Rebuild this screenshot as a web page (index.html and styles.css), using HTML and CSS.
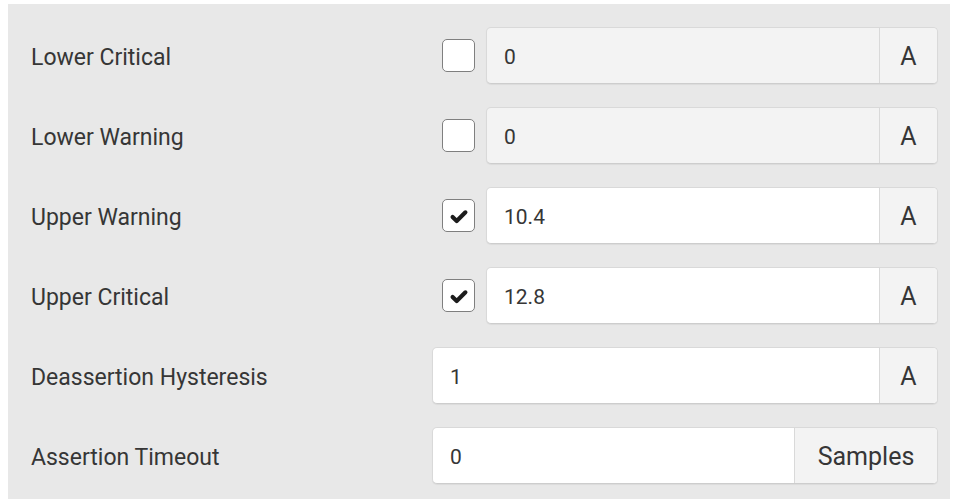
FILE: index.html
```html
<!DOCTYPE html>
<html lang="en">

<head>
    <meta charset="UTF-8">
    <meta name="viewport" content="width=device-width, initial-scale=1.0">
    <link rel="stylesheet" href="styles.css">
</head>

<body>
    <div class="panel">
        <div class="row">
            <div class="label">Lower Critical</div>
            <div class="control">
                <span class="check"></span>
                <div class="group disabled">
                    <span class="value">0</span>
                    <span class="addon">A</span>
                </div>
            </div>
        </div>
        <div class="row">
            <div class="label">Lower Warning</div>
            <div class="control">
                <span class="check"></span>
                <div class="group disabled">
                    <span class="value">0</span>
                    <span class="addon">A</span>
                </div>
            </div>
        </div>
        <div class="row">
            <div class="label">Upper Warning</div>
            <div class="control">
                <span class="check on">
                    <svg viewBox="0 0 24 24" width="22" height="22"><path d="M5 13 L9.5 17.5 L19 8" /></svg>
                </span>
                <div class="group">
                    <span class="value">10.4</span>
                    <span class="addon">A</span>
                </div>
            </div>
        </div>
        <div class="row">
            <div class="label">Upper Critical</div>
            <div class="control">
                <span class="check on">
                    <svg viewBox="0 0 24 24" width="22" height="22"><path d="M5 13 L9.5 17.5 L19 8" /></svg>
                </span>
                <div class="group">
                    <span class="value">12.8</span>
                    <span class="addon">A</span>
                </div>
            </div>
        </div>
        <div class="row">
            <div class="label">Deassertion Hysteresis</div>
            <div class="control">
                <div class="group">
                    <span class="value">1</span>
                    <span class="addon">A</span>
                </div>
            </div>
        </div>
        <div class="row">
            <div class="label">Assertion Timeout</div>
            <div class="control">
                <div class="group">
                    <span class="value">0</span>
                    <span class="addon wide">Samples</span>
                </div>
            </div>
        </div>
    </div>
</body>

</html>
```

FILE: styles.css
```css
body {
    margin: 0;
    background-color: #ffffff;
    font-family: Roboto, "Liberation Sans", sans-serif;
    color: #3a3a3a;
}

.panel {
    margin: 4px 12px 3px 8px;
    padding: 23px 12px 15px 23px;
    background-color: #e8e8e8;
    display: flex;
    flex-direction: column;
    gap: 23px;
}

.row {
    display: grid;
    grid-template-columns: 401px 1fr;
    align-items: center;
    height: 57px;
}

.label {
    padding-top: 3px;
    font-size: 23px;
    color: #363636;
}

.control {
    display: flex;
    align-items: center;
    height: 100%;
}

.check {
    width: 31px;
    height: 31px;
    margin: 0 11px 0 10px;
    border: 1px solid #7f7f7f;
    border-radius: 5px;
    background-color: #ffffff;
    display: flex;
    align-items: center;
    justify-content: center;
    flex: none;
}

.check svg path {
    fill: none;
    stroke: #1c1c1c;
    stroke-width: 4.5;
    stroke-linecap: round;
    stroke-linejoin: round;
}

.group {
    flex: 1;
    height: 100%;
    box-sizing: border-box;
    display: flex;
    border: 1px solid #d9d9d9;
    border-bottom-color: #cdcdcd;
    border-radius: 5px;
    background-color: #ffffff;
    overflow: hidden;
    box-shadow: 0 1px 1px rgba(0, 0, 0, 0.06);
}

.group.disabled {
    background-color: #f3f3f3;
}

.value {
    flex: 1;
    display: flex;
    align-items: center;
    padding: 2px 0 0 17px;
    font-size: 21px;
    color: #363636;
}

.addon {
    width: 57px;
    display: flex;
    align-items: center;
    justify-content: center;
    padding-top: 2px;
    border-left: 1px solid #d9d9d9;
    background-color: #f3f3f3;
    font-size: 25px;
    color: #363636;
}

.addon.wide {
    width: 142px;
}
```
